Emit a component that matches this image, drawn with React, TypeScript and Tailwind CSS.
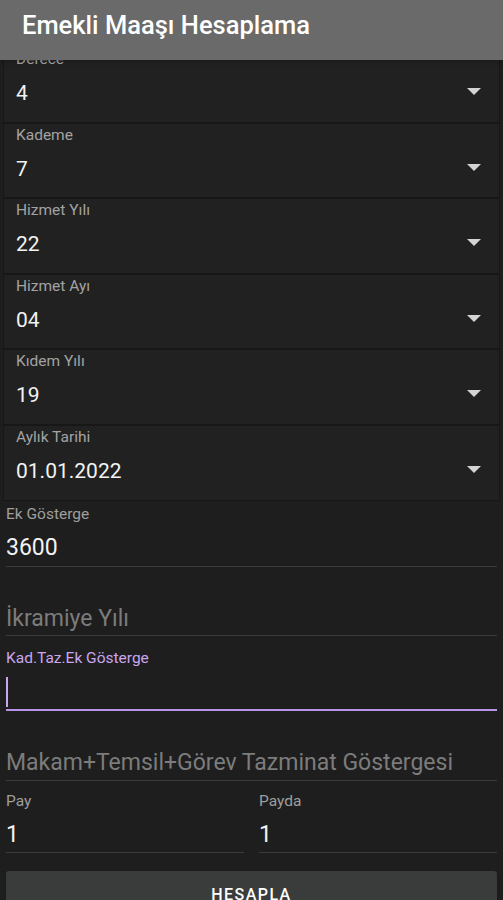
import { useState } from 'react';

const spinners = [
  { label: 'Derece', value: '4' },
  { label: 'Kademe', value: '7' },
  { label: 'Hizmet Yılı', value: '22' },
  { label: 'Hizmet Ayı', value: '04' },
  { label: 'Kıdem Yılı', value: '19' },
  { label: 'Aylık Tarihi', value: '01.01.2022' },
];

function Spinner({ label, value }: { label: string; value: string }) {
  return (
    <div className="relative h-[75.6px] border border-[#171717] bg-[#212121] px-[12px]">
      <p className="pt-[1px] text-[15.5px] leading-[20px] text-[#a3a3a3]">{label}</p>
      <p className="mt-[11px] text-[21px] leading-[26px] text-[#f2f2f2]">{value}</p>
      <svg className="absolute right-[18px] top-[40px]" width="14" height="7" viewBox="0 0 14 7">
        <path d="M0 0h14L7 7z" fill="#d4d4d4" />
      </svg>
    </div>
  );
}

export default function App() {
  const [pay] = useState('1');
  const [payda] = useState('1');

  return (
    <div className="h-[900px] overflow-hidden bg-[#1e1e1e] font-['Roboto',sans-serif]">
      <header className="relative z-10 flex h-[60px] items-center bg-[#6a6a6a] px-[22px] shadow-md">
        <h1 className="-mt-[10px] text-[25.5px] font-medium text-white">Emekli Maaşı Hesaplama</h1>
      </header>

      <div className="-mt-[13px] px-[3px]">
        {spinners.map((s) => (
          <Spinner key={s.label} label={s.label} value={s.value} />
        ))}
      </div>

      <div className="px-[6px]">
        {/* Ek Gösterge */}
        <div className="mt-[3px] border-b border-[#3a3a3a] pb-[4px]">
          <p className="text-[15.5px] leading-[20px] text-[#9e9e9e]">Ek Gösterge</p>
          <p className="mt-[10px] text-[23px] leading-[28px] text-[#f2f2f2]">3600</p>
        </div>

        {/* İkramiye Yılı */}
        <div className="mt-[38px] border-b border-[#3a3a3a] pb-[2px]">
          <p className="text-[23px] leading-[28px] text-[#7c7c7c]">İkramiye Yılı</p>
        </div>

        {/* Kad.Taz.Ek Gösterge (focused) */}
        <div className="mt-[12px]">
          <p className="text-[15.5px] leading-[20px] text-[#c9a6ef]">Kad.Taz.Ek Gösterge</p>
          <div className="h-[43px] border-b-2 border-[#b994e6] pt-[9px]">
            <div className="h-[30px] w-[2px] bg-[#c9a6ef]" />
          </div>
        </div>

        {/* Makam */}
        <div className="mt-[38px] border-b border-[#3a3a3a] pb-[3px]">
          <p className="whitespace-nowrap text-[23px] leading-[28px] text-[#7c7c7c]">
            Makam+Temsil+Görev Tazminat Göstergesi
          </p>
        </div>

        <div className="mt-[10px] flex gap-[15px]">
          <div className="flex-1 border-b border-[#3a3a3a] pb-[3px]">
            <p className="text-[15.5px] leading-[20px] text-[#9e9e9e]">Pay</p>
            <p className="mt-[10px] text-[23px] leading-[28px] text-[#f2f2f2]">{pay}</p>
          </div>
          <div className="flex-1 border-b border-[#3a3a3a] pb-[3px]">
            <p className="text-[15.5px] leading-[20px] text-[#9e9e9e]">Payda</p>
            <p className="mt-[10px] text-[23px] leading-[28px] text-[#f2f2f2]">{payda}</p>
          </div>
        </div>

        <button
          type="button"
          className="mt-[18px] h-[48px] w-full rounded-[3px] bg-[#3a3c3c] text-[16px] font-medium tracking-[0.09em] text-white shadow"
        >
          HESAPLA
        </button>
      </div>
    </div>
  );
}
